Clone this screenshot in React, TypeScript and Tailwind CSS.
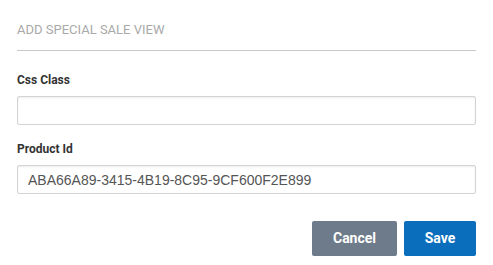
const App = () => {
  return (
    <div className="min-h-screen bg-white font-['Roboto',sans-serif]">
      <div className="w-[493px] px-[17px] pt-[20px]">
        <h3 className="pb-[10px] text-[13px] leading-[20px] uppercase text-[#a9a9a9]">
          Add Special Sale View
        </h3>
        <div className="border-t border-[#c8c8c8]" />

        <form className="flex flex-col pt-[22px]">
          <label className="text-[12px] leading-[14px] font-bold text-[#333]">
            Css Class
          </label>
          <input
            type="text"
            className="mt-[9px] h-[29px] w-full rounded-[2px] border border-[#d4d4d4] px-[10px] text-[14px] text-[#555] shadow-[inset_0_1px_2px_rgba(0,0,0,0.08)] outline-none font-['Liberation_Sans',Arial,sans-serif]"
          />

          <label className="mt-[17px] text-[12px] leading-[14px] font-bold text-[#333]">
            Product Id
          </label>
          <input
            type="text"
            defaultValue="ABA66A89-3415-4B19-8C95-9CF600F2E899"
            className="mt-[9px] h-[29px] w-full rounded-[2px] border border-[#d4d4d4] px-[10px] text-[14px] text-[#555] shadow-[inset_0_1px_2px_rgba(0,0,0,0.08)] outline-none font-['Liberation_Sans',Arial,sans-serif]"
          />

          <div className="mt-[27px] flex justify-end gap-[7px]">
            <button
              type="button"
              className="h-[35px] w-[85px] rounded-[2px] bg-[#6e7b8b] text-[14px] font-bold text-white"
            >
              Cancel
            </button>
            <button
              type="button"
              className="h-[35px] w-[72px] rounded-[2px] bg-[#0a6ebd] text-[14px] font-bold text-white"
            >
              Save
            </button>
          </div>
        </form>
      </div>
    </div>
  );
};

export default App;
